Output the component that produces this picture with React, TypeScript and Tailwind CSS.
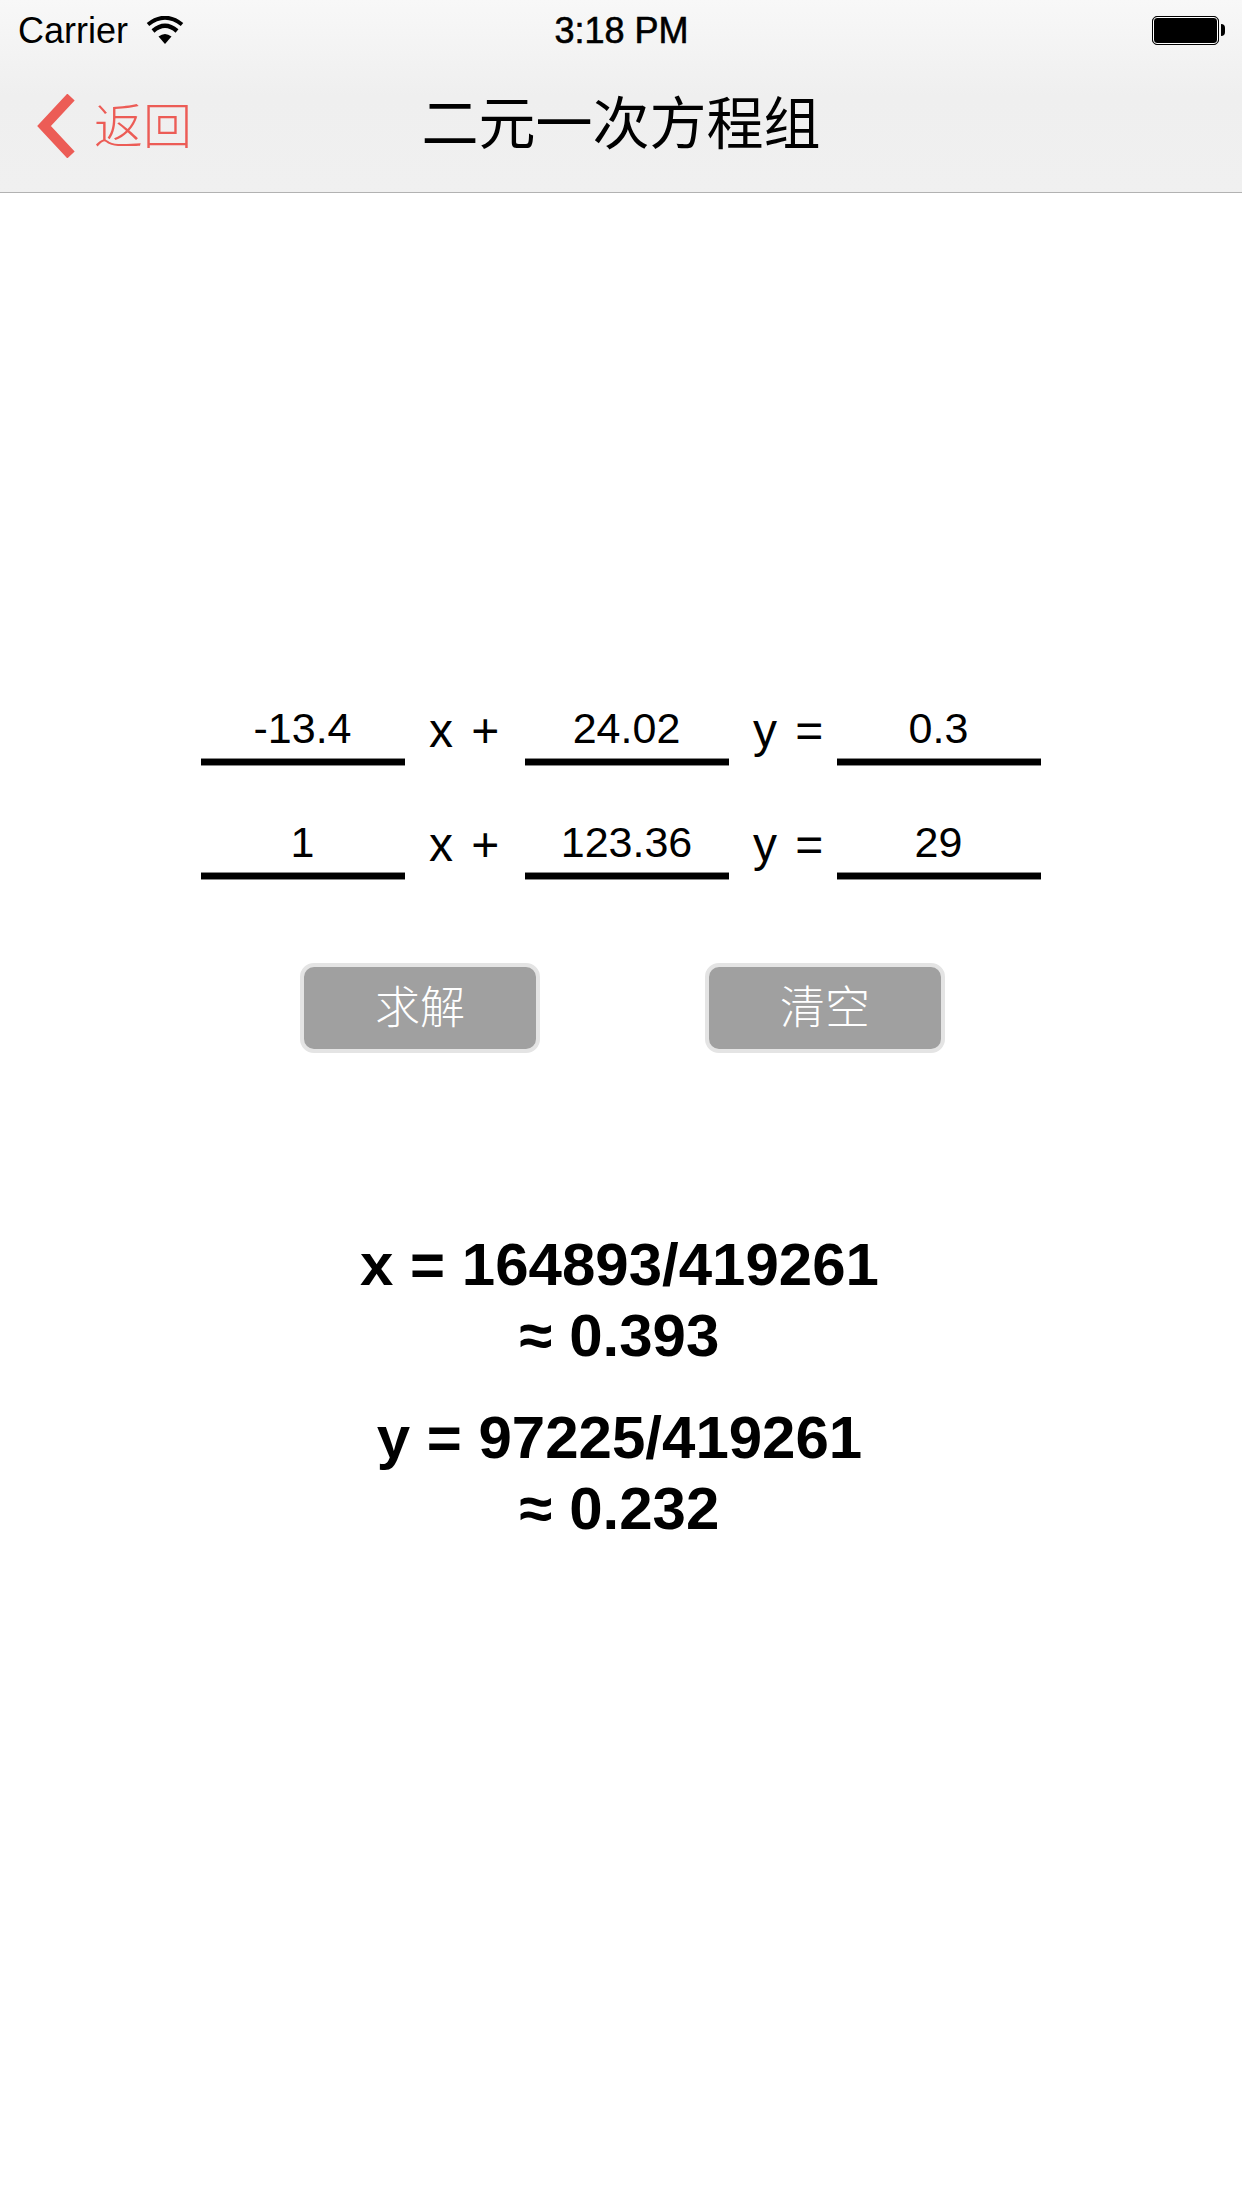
const SANS = "font-['Liberation_Sans','Noto_Sans_CJK_SC',sans-serif]";

function Field({ value }: { value: string }) {
  return (
    <div className="flex w-[204px] flex-col">
      <div className="flex h-[58px] items-center justify-center pr-[1px] pb-[2px] text-[43px] leading-none text-black">{value}</div>
      <div className="h-[8px] border-y border-[#888] bg-black" />
    </div>
  );
}

function Label({ text, width }: { text: string; width: string }) {
  return <div className={`${width} pt-[2px] pl-[24px] text-[48px] leading-[58px] whitespace-nowrap text-black [word-spacing:5px]`}>{text}</div>;
}

function Row({ a, b, c }: { a: string; b: string; c: string }) {
  return (
    <div className="flex items-start">
      <Field value={a} />
      <Label text="x +" width="w-[120px]" />
      <Field value={b} />
      <Label text="y =" width="w-[108px]" />
      <Field value={c} />
    </div>
  );
}

function Btn({ text }: { text: string }) {
  return (
    <div className="flex h-[90px] w-[240px] items-center justify-center rounded-[14px] border-[4px] border-[#e4e4e4] bg-[#a0a0a0] pt-[1px] text-[45px] leading-none font-light text-white">
      {text}
    </div>
  );
}

export default function App() {
  return (
    <div className={`${SANS} h-[2208px] w-[1242px] bg-white text-black`}>
      <header className="h-[193px] border-b border-[#b2b2b2] bg-gradient-to-b from-[#f8f8f8] via-[#efefef] to-[#f0f0f0]">
        <div className="flex h-[60px] items-center justify-between pt-[2px] pr-[17px] pl-[18px]">
          <div className="flex w-[300px] items-center gap-[18px]">
            <span className="text-[36px] leading-none">Carrier</span>
            <svg width="38" height="28" viewBox="0 0 38 28" className="-mt-[2px] block">
              <path d="M19 28 L12.5 20.5 Q19 15.5 25.5 20.5 Z" fill="black" />
              <path d="M7 15 Q19 4.5 31 15" fill="none" stroke="black" strokeWidth="4.4" />
              <path d="M2 8.5 Q19 -5 36 8.5" fill="none" stroke="black" strokeWidth="4" />
            </svg>
          </div>
          <span className="text-[36px] leading-none font-medium [-webkit-text-stroke:0.6px_black]">3:18 PM</span>
          <div className="-mt-[2px] flex w-[300px] items-center justify-end">
            <div className="h-[29px] w-[67px] rounded-[5px] border border-black bg-black outline-1 -outline-offset-2 outline-white" />
            <div className="ml-[2px] h-[12px] w-[4px] rounded-r-full bg-black" />
          </div>
        </div>
        <div className="relative flex h-[132px] items-center">
          <svg width="40" height="64" viewBox="0 0 40 64" className="ml-[37px] block">
            <path d="M34 3 L7 32 L34 61" fill="none" stroke="#ec5c56" strokeWidth="10" />
          </svg>
          <span className="mt-[3px] ml-[17px] text-[49px] leading-none font-light text-[#ec5c56]">返回</span>
          <div className="absolute inset-x-0 top-0 flex h-full items-center justify-center pb-[4px] text-[57px] leading-none">二元一次方程组</div>
        </div>
      </header>

      <main className="flex flex-col items-center pt-[507px]">
        <div className="flex flex-col gap-[48px]">
          <Row a="-13.4" b="24.02" c="0.3" />
          <Row a="1" b="123.36" c="29" />
        </div>
        <div className="mt-[83px] flex gap-[165px] pl-[3px]">
          <Btn text="求解" />
          <Btn text="清空" />
        </div>
        <div className="mt-[176px] flex flex-col gap-[31px] pr-[3px] text-center text-[60px] leading-[71px] font-bold">
          <div>
            <div>x = 164893/419261</div>
            <div>≈ 0.393</div>
          </div>
          <div>
            <div>y = 97225/419261</div>
            <div>≈ 0.232</div>
          </div>
        </div>
      </main>
    </div>
  );
}
